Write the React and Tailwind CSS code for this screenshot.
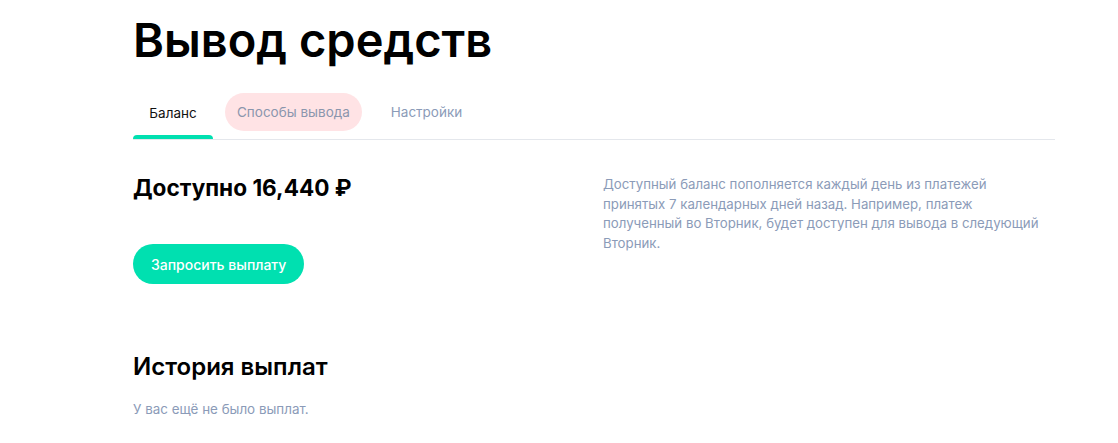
export default function App() {
  const font = { fontFamily: 'Inter, "Noto Sans", sans-serif' };
  return (
    <div className="min-h-[443px] w-[1118px] bg-white pl-[133px]" style={font}>
      <div className="w-[922px]">
        <h1 className="pt-[10px] text-[47px] font-semibold leading-[60px] text-black">
          Вывод средств
        </h1>
        <div className="mt-[23px] flex items-end border-b border-[#e4e7ec]">
          <div className="flex flex-col items-center">
            <div className="flex h-[38px] items-center px-4 pt-[1px] text-[13.5px] text-[#111]">Баланс</div>
            <div className="mt-[3px] h-[4px] w-[80px] rounded-t-full bg-[#00e0b0]" />
          </div>
          <div className="mb-[8px] ml-[12px] flex h-[38px] items-center rounded-full bg-[#ffe3e5] px-[12px] pt-[1px] text-[13.5px] text-[#8b96ad]">
            Способы вывода
          </div>
          <div className="mb-[8px] flex h-[38px] items-center px-[29px] pt-[1px] text-[13.5px] text-[#8b9bb8]">
            Настройки
          </div>
        </div>
        <div className="mt-[34px] flex">
          <div className="w-[470px]">
            <div className="text-[22.6px] font-bold leading-[28px] text-black">Доступно 16,440 ₽</div>
            <button className="mt-[42px] flex h-[40px] items-center rounded-full bg-[#00e0b0] px-[18px] text-[14px] font-medium text-white">
              Запросить выплату
            </button>
          </div>
          <p className="w-[440px] pt-[1px] text-[13.25px] leading-[19.5px] text-[#8b9bb8]">
            Доступный баланс пополняется каждый день из платежей принятых 7 календарных дней назад. Например, платеж полученный во Вторник, будет доступен для вывода в следующий Вторник.
          </p>
        </div>
        <h2 className="mt-[68px] text-[24px] font-semibold leading-[30px] text-black">История выплат</h2>
        <p className="mt-[18px] text-[13.4px] leading-[18px] text-[#8b9bb8]">У вас ещё не было выплат.</p>
      </div>
    </div>
  );
}
